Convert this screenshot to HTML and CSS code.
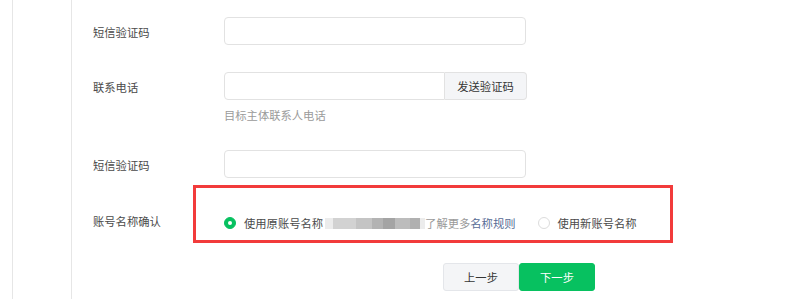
FILE: index.html
```html
<!DOCTYPE html>
<html>
<head>
  <meta charset="UTF-8">
  <title>账号迁移</title>
  <link rel="stylesheet" href="styles.css">
</head>
<body>
  <div class="page">
    <div class="side"></div>
    <div class="form">
      <div class="row first">
        <div class="label">短信验证码</div>
        <div class="control"><div class="input"></div></div>
      </div>

      <div class="row">
        <div class="label">联系电话</div>
        <div class="control">
          <div class="input-group">
            <div class="input joined"></div>
            <div class="addon">发送验证码</div>
          </div>
        </div>
      </div>
      <div class="tips">目标主体联系人电话</div>

      <div class="row third">
        <div class="label">短信验证码</div>
        <div class="control"><div class="input"></div></div>
      </div>

      <div class="row name-row">
        <div class="label">账号名称确认</div>
        <div class="mark">
          <label class="radio">
            <span class="dot checked"></span>
            <span>使用原账号名称</span>
            <span class="mosaic">
              <i class="m1"></i><i class="m2"></i><i class="m3"></i><i class="m4"></i><i class="m5"></i><i class="m6"></i><i class="m7"></i><i class="m8"></i>
            </span>
            <span class="more">了解更多<a class="link">名称规则</a></span>
          </label>
          <label class="radio">
            <span class="dot"></span>
            <span>使用新账号名称</span>
          </label>
        </div>
      </div>

      <div class="actions">
        <button class="btn">上一步</button>
        <button class="btn primary">下一步</button>
      </div>
    </div>
  </div>
</body>
</html>
```

FILE: styles.css
```css
* { box-sizing: border-box; }
html, body {
  margin: 0; padding: 0;
  background: #fff;
  font-family: "Noto Sans CJK SC", "Noto Sans", sans-serif;
  font-size: 11.3px;
  color: #4a4a4a;
  height: 100%;
  overflow: hidden;
}
.page {
  display: flex;
  height: 299px;
  margin-left: 12px;
  border-left: 1px solid #e6e6e6;
}
.side {
  width: 59px;
  border-right: 1px solid #e6e6e6;
}
.form {
  padding-left: 21px;
  flex: 1;
}
.row {
  display: flex;
  align-items: center;
  margin-top: 27px;
}
.row.first { margin-top: 17px; }
.row.third { margin-top: 26px; }
.label {
  width: 131px;
  line-height: 18px;
  padding-top: 1px;
}
.input {
  width: 302px;
  height: 28px;
  border: 1px solid #e2e2e2;
  border-radius: 4px;
  background: #fff;
}
.input-group { display: flex; width: 303px; }
.input.joined {
  width: 221px;
  border-radius: 4px 0 0 4px;
}
.addon {
  width: 82px;
  height: 28px;
  line-height: 26px;
  text-align: center;
  background: #f4f5f7;
  border: 1px solid #e2e2e2;
  border-left: none;
  border-radius: 0 4px 4px 0;
  color: #353535;
}
.tips {
  margin: 6px 0 0 131px;
  line-height: 18px;
  color: #9a9a9a;
}
.name-row { margin-top: 7px; }
.name-row .label { padding-top: 0; margin-top: 14px; }
.mark {
  margin-left: -31px;
  width: 480px;
  height: 58px;
  border: 3px solid #f23b3b;
  padding: 26px 0 0 28px;
  display: flex;
}
.radio {
  display: flex;
  align-items: center;
  height: 18px;
  color: #4a4a4a;
}
.dot {
  width: 12px; height: 12px;
  border-radius: 50%;
  border: 1px solid #dcdcdc;
  margin-right: 8px;
  position: relative;
}
.dot.checked {
  background: #07c160;
  border-color: #07c160;
}
.dot.checked::after {
  content: "";
  position: absolute;
  left: 3px; top: 3px;
  width: 4px; height: 4px;
  border-radius: 50%;
  background: #fff;
}
.mosaic {
  display: flex;
  height: 11px;
  margin-left: 2px;
}
.mosaic i { display: block; height: 11px; }
.m1 { width: 8px; background: #ececec; }
.m2 { width: 23px; background: #d2d2d2; }
.m3 { width: 16px; background: #c4c4c4; }
.m4 { width: 11px; background: #b3b3b3; }
.m5 { width: 12px; background: #a4a4a4; }
.m6 { width: 15px; background: #bcbcbc; }
.m7 { width: 10px; background: #b0b0b0; }
.m8 { width: 5px; background: #ececec; }
.more { color: #9a9a9a; }
.link { color: #576b95; }
.radio + .radio { margin-left: 22px; }
.actions {
  display: flex;
  margin: 20px 0 0 350px;
}
.btn {
  width: 76px;
  height: 28px;
  border: 1px solid #e4e6ea;
  border-radius: 3px;
  background: #f4f5f7;
  color: #353535;
  font-family: inherit;
  font-size: 11.3px;
  padding: 0;
}
.btn.primary {
  background: #07c160;
  border-color: #07c160;
  color: #fff;
}
```
